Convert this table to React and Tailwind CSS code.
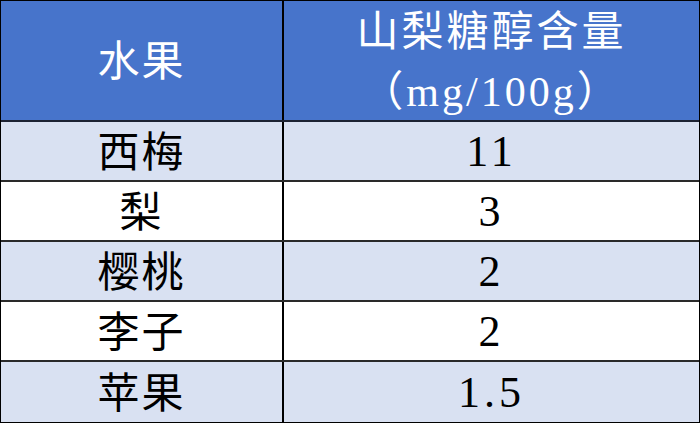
import React from "react";

const rows = [
  ["西梅", "11", "bg-[#d9e1f2]"],
  ["梨", "3", "bg-white"],
  ["樱桃", "2", "bg-[#d9e1f2]"],
  ["李子", "2", "bg-white"],
  ["苹果", "1.5", "bg-[#d9e1f2]"],
];

const font = { fontFamily: '"Liberation Serif", "Noto Sans CJK SC", serif' };

export default function App() {
  return (
    <div className="w-[700px] h-[423px] bg-white border border-black flex flex-col" style={font}>
      <div className="flex h-[121px] bg-[#4774cb] border-b-2 border-[#1c2233] text-white">
        <div className="w-[283px] border-r-2 border-black flex items-center justify-center text-[42px] tracking-[2px] pt-[4px]">
          水果
        </div>
        <div className="flex-1 flex flex-col items-center justify-center text-[42px] leading-[60px] pt-[2px]">
          <div className="tracking-[3px]">山梨糖醇含量</div>
          <div className="tracking-[3px]">（mg/100g）</div>
        </div>
      </div>
      {rows.map(([a, b, bg], i) => (
        <div
          key={i}
          className={`flex h-[60px] ${bg} ${i < rows.length - 1 ? "border-b-2 border-[#2a2a2a]" : ""}`}
        >
          <div className="w-[283px] border-r-2 border-black flex items-center justify-center text-[42px] tracking-[2px] pt-[4px] text-black">
            {a}
          </div>
          <div className="flex-1 flex items-center justify-center text-[44px] tracking-[4px] pt-[2px] text-black">
            {b}
          </div>
        </div>
      ))}
    </div>
  );
}
